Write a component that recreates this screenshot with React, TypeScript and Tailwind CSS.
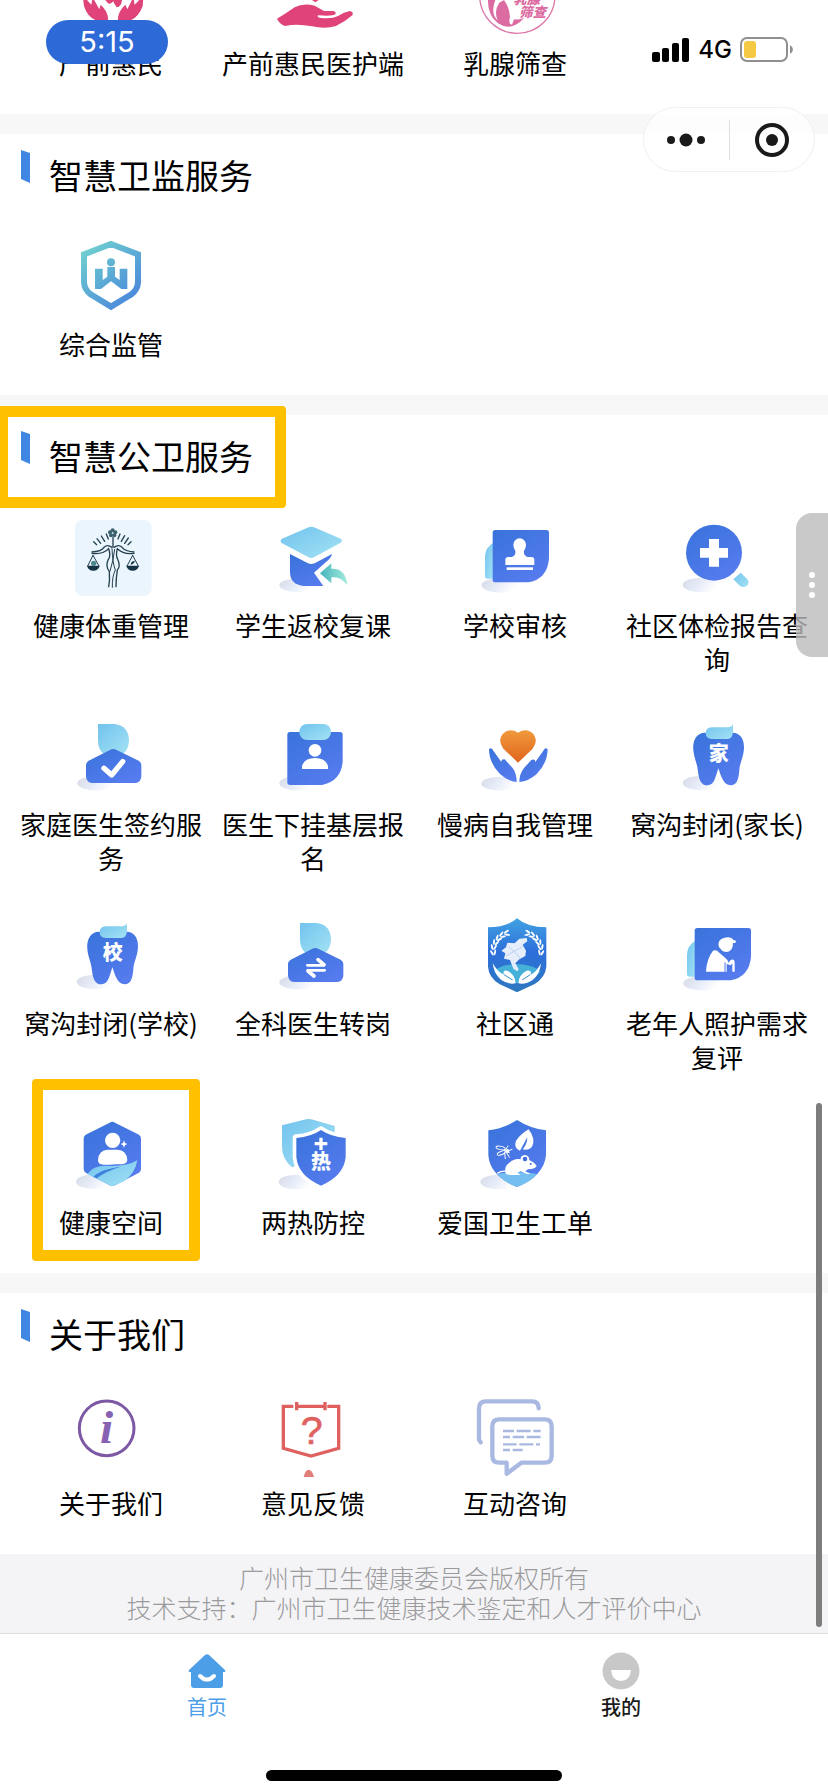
import React from "react";

type IconProps = { origin: string; children: React.ReactNode };

function Icon({ origin, children }: IconProps) {
  return (
    <svg viewBox={`${origin} 228 228`} className="size-[76px] shrink-0 overflow-visible" aria-hidden="true">
      {children}
    </svg>
  );
}

function Gradients() {
  return (
    <svg className="absolute size-0" aria-hidden="true">
      <defs>
        <linearGradient id="blue" x1="0" y1="0" x2="0.7" y2="1">
          <stop offset="0" stopColor="#3873da" />
          <stop offset="1" stopColor="#567bee" />
        </linearGradient>
        <linearGradient id="sky" x1="0" y1="0" x2="1" y2="1">
          <stop offset="0" stopColor="#72c3ee" />
          <stop offset="1" stopColor="#a3e2f4" />
        </linearGradient>
        <linearGradient id="shade" x1="0" y1="0" x2="1" y2="0.3">
          <stop offset="0" stopColor="#d6dae6" />
          <stop offset="0.5" stopColor="#e6ebf8" />
          <stop offset="1" stopColor="#ffffff" />
        </linearGradient>
        <linearGradient id="teal" x1="0" y1="0" x2="1" y2="0">
          <stop offset="0" stopColor="#43b3bb" />
          <stop offset="1" stopColor="#a5ecdd" />
        </linearGradient>
        <linearGradient id="shield" gradientUnits="userSpaceOnUse" x1="250" y1="140" x2="410" y2="320">
          <stop offset="0" stopColor="#70d2cf" />
          <stop offset="1" stopColor="#4781dc" />
        </linearGradient>
        <linearGradient id="orange" x1="0" y1="0" x2="0" y2="1">
          <stop offset="0" stopColor="#f09a3c" />
          <stop offset="1" stopColor="#e0641d" />
        </linearGradient>
        <linearGradient id="community" x1="0" y1="0" x2="0" y2="1">
          <stop offset="0" stopColor="#41a2e2" />
          <stop offset="0.45" stopColor="#2d6fdb" />
          <stop offset="1" stopColor="#2d78c0" />
        </linearGradient>
      </defs>
    </svg>
  );
}

function PregnancyIcon() {
  return (
    <Icon origin="219 -126">
      <g fill="#df4379">
        <path d="M246 -30 L252 18 Q262 52 290 62 H324 Q326 36 302 14 L298 28 L278 -8 L274 14 Q256 -2 246 -30Z" />
        <path d="M432 -30 L428 18 Q416 52 390 62 H354 Q352 36 376 14 L382 28 L400 -8 L404 14 Q424 -2 432 -30Z" />
        <path d="M316 0 H366 Q364 22 350 22 Q342 12 340 4 Q332 14 324 10 Z" />
      </g>
    </Icon>
  );
}

function CareHandIcon() {
  return (
    <Icon origin="825 -126">
      <path d="M936 0 L946 7 L956 0Z" fill="#df4379" />
      <path
        d="M831 56 Q856 42 884 22 Q910 8 944 17 L972 33 H1000 Q1010 35 1006 43 Q1000 49 954 46 Q950 50 958 53 Q994 58 1014 48 Q1032 36 1050 33 Q1062 36 1057 46 Q1034 66 1008 78 Q976 88 936 79 Q890 70 856 78 Q838 72 831 56Z"
        fill="#df4379"
      />
    </Icon>
  );
}

function ScreeningIcon() {
  return (
    <Icon origin="189 -126">
      <circle cx="310" cy="-13" r="113" fill="#ffffff" stroke="#dc76a8" strokeWidth="4" />
      <path d="M224 -20 Q214 40 252 70 Q284 92 318 66 L330 54 Q312 60 300 58 L294 74 Q282 74 288 50 Q286 22 270 0 L256 8 Q238 34 252 62 Q228 42 244 0 V-20Z" fill="#dc6ba2" />
      <g fill="#dc6ba2" className="font-['Noto_Sans_CJK_SC',sans-serif] font-black" fontSize="40" fontStyle="italic">
        <text x="298" y="11">乳腺</text>
        <text x="316" y="50">筛查</text>
      </g>
    </Icon>
  );
}

function SupervisionIcon() {
  return (
    <Icon origin="219 117">
      <path d="M333 132 L414 163 V247 Q413 268 394 283 L333 320 L272 283 Q253 268 252 247 V163Z" fill="none" stroke="url(#shield)" strokeWidth="18" />
      <g fill="url(#shield)">
        <circle cx="333" cy="187" r="12" />
        <path d="M285 206 H308 V240 L322 230 V201 H345 V230 L359 240 V206 H382 V267 H364 L333 244 L303 267 H285Z" />
      </g>
    </Icon>
  );
}

function WeightIcon() {
  return (
    <Icon origin="219 60">
      <rect x="225" y="60" width="230" height="228" rx="24" fill="#ebf5fd" />
      <g fill="none" stroke="#24404f" strokeWidth="4" strokeLinecap="round">
        <path d="M281 125 L290 134 M291 116 L302 130 M304 108 L314 124 M319 102 L325 117 M393 125 L384 134 M385 114 L374 130 M374 107 L364 124 M360 102 L354 117" />
        <path d="M339 112 V140 M276 156 Q304 154 312 142 Q322 132 336 142 M402 156 Q376 154 366 142 Q356 132 342 142" />
        <path d="M276 160 Q310 164 326 146 Q334 168 324 180 Q316 200 328 214 Q330 240 326 260 M402 160 Q370 164 352 146 Q346 168 354 180 Q362 200 352 210 Q348 236 348 260" />
        <path d="M336 146 Q338 190 346 210 Q336 230 337 262 M344 148 Q340 182 330 214" strokeWidth="3" />
        <path d="M279 166 L263 198 M279 166 L297 198 M398 166 L381 198 M398 166 L415 198" strokeWidth="3" />
      </g>
      <g fill="#153344">
        <path d="M261 197 H299 Q295 212 280 212 Q265 212 261 197Z M379 197 H417 Q413 212 398 212 Q383 212 379 197Z" />
        <circle cx="281" cy="190" r="8" fill="#4e8a8d" />
        <path d="M392 194 Q392 184 405 182 Q402 192 392 194Z" />
        <g fill="#3b606e">
          <circle cx="338" cy="91" r="6" />
          <circle cx="346" cy="97" r="6" />
          <circle cx="343" cy="106" r="6" />
          <circle cx="333" cy="106" r="6" />
          <circle cx="330" cy="97" r="6" />
        </g>
      </g>
    </Icon>
  );
}

function StudentIcon() {
  return (
    <Icon origin="825 60">
      <ellipse cx="892" cy="256" rx="54" ry="20" fill="url(#shade)" />
      <path d="M870 162 L924 190 Q934 194 944 190 L996 162 Q994 174 978 186 L942 218 L970 258 H912 Q870 254 870 216Z" fill="url(#blue)" />
      <path d="M846 116 L926 82 Q934 78 942 82 L1022 116 Q1030 122 1022 128 L942 172 Q934 176 926 172 L846 130 Q838 122 846 116Z" fill="url(#sky)" />
      <path d="M960 220 L994 190 V206 Q1038 204 1042 256 Q1022 228 994 232 V250Z" fill="url(#teal)" />
    </Icon>
  );
}

function CardBase() {
  return (
    <>
      <ellipse cx="260" cy="256" rx="58" ry="22" fill="url(#shade)" />
      <path d="M238 128 Q213 142 213 172 V228 Q213 236 221 236 H238Z" fill="url(#sky)" />
      <path d="M244 90 H397 Q405 90 405 98 V176 Q400 236 344 247 H244 Q236 247 236 239 V98 Q236 90 244 90Z" fill="url(#blue)" />
    </>
  );
}

function StampIcon() {
  return (
    <Icon origin="189 60">
      <CardBase />
      <g fill="#ffffff">
        <path d="M298 134 A19 19 0 1 1 336 134 Q336 144 330 152 Q328 168 342 171 H352 Q361 171 361 180 V195 H274 V180 Q274 171 283 171 H292 Q306 168 304 152 Q298 144 298 134Z" />
        <rect x="278" y="202" width="79" height="8" />
      </g>
    </Icon>
  );
}

function ElderIcon() {
  return (
    <Icon origin="189 60">
      <CardBase />
      <g fill="#ffffff">
        <path d="M309 148 Q302 124 326 119 Q346 115 352 126 L360 128 L358 135 H351 Q351 160 332 162 Q318 162 312 150Z" />
        <path d="M270 221 Q272 182 291 158 Q301 154 310 164 L328 180 Q338 188 338 194 L344 186 Q355 182 356 192 V221 H349 V196 L344 202 L332 198 V221Z" />
      </g>
      <path d="M327 193 V221" stroke="#4f76e8" strokeWidth="3" />
    </Icon>
  );
}

function ReportIcon() {
  return (
    <Icon origin="795 60">
      <ellipse cx="864" cy="255" rx="58" ry="22" fill="url(#shade)" />
      <path d="M958 238 L980 218 L1000 238 Q1008 248 998 258 Q988 264 978 258Z" fill="url(#sky)" />
      <circle cx="900" cy="158" r="84" fill="url(#blue)" />
      <path d="M885 117 H915 V144 H942 V173 H915 V200 H885 V173 H858 V144 H885Z" fill="#ffffff" />
    </Icon>
  );
}

function DoctorIcon({ variant }: { variant: "check" | "swap" }) {
  return (
    <Icon origin="219 57">
      <ellipse cx="292" cy="250" rx="60" ry="22" fill="url(#shade)" />
      <path d="M294 72 H344 Q387 78 387 122 Q386 150 366 164 H314 Q294 150 294 122Z" fill="url(#sky)" />
      <path d="M330 150 Q340 144 350 150 L416 182 Q424 187 424 196 V230 Q422 247 406 249 H276 Q260 247 258 230 V196 Q258 187 266 182Z" fill="url(#blue)" />
      {variant === "check" ? (
        <path d="M312 205 L335 225 L368 185" fill="none" stroke="#ffffff" strokeWidth="16" strokeLinecap="round" strokeLinejoin="round" />
      ) : (
        <g fill="none" stroke="#ffffff" strokeLinecap="round" strokeLinejoin="round">
          <path d="M316 199 H366 M368 214 H318" strokeWidth="8" />
          <path d="M366 197 L348 182 M318 216 L336 231" strokeWidth="11" />
        </g>
      )}
    </Icon>
  );
}

function ClipboardIcon() {
  return (
    <Icon origin="825 57">
      <ellipse cx="892" cy="250" rx="54" ry="22" fill="url(#shade)" />
      <path d="M870 96 H1020 Q1028 96 1028 104 V186 Q1022 244 966 255 H870 Q862 255 862 247 V104 Q862 96 870 96Z" fill="url(#blue)" />
      <rect x="898" y="72" width="95" height="48" rx="23" fill="url(#sky)" />
      <circle cx="945" cy="151" r="19" fill="#ffffff" />
      <path d="M906 207 V199 Q912 174 945 174 Q978 174 984 199 V207Z" fill="#ffffff" />
    </Icon>
  );
}

function HeartIcon() {
  return (
    <Icon origin="189 57">
      <ellipse cx="258" cy="251" rx="56" ry="21" fill="url(#shade)" />
      <path d="M312 188 L268 146 Q250 122 266 102 Q286 82 312 98 Q338 82 358 102 Q374 122 356 146Z" fill="url(#orange)" />
      <path d="M225 148 Q231 140 238 152 L262 186 Q262 176 272 178 L296 204 Q308 220 308 246 Q282 244 258 222 Q226 190 225 148Z" fill="url(#blue)" />
      <path d="M401 148 Q395 140 388 152 L364 186 Q364 176 352 180 L330 204 Q316 222 316 246 Q344 244 368 222 Q400 190 401 148Z" fill="url(#blue)" />
    </Icon>
  );
}

function ToothIcon({ char }: { char: string }) {
  return (
    <Icon origin="795 57">
      <ellipse cx="864" cy="249" rx="58" ry="22" fill="url(#shade)" />
      <path
        d="M880 99 C850 94 835 120 838 150 C840 175 850 190 852 215 C855 240 862 256 880 256 C902 256 905 228 913 205 C922 230 928 256 950 256 C970 256 974 235 976 210 C978 185 990 170 990 140 C990 110 970 92 945 100Z"
        fill="url(#blue)"
      />
      <path d="M893 82 H940 Q954 82 956 72 Q962 117 940 117 H893 Q875 116 875 100 Q875 83 893 82Z" fill="url(#sky)" />
      <text x="914" y="184" textAnchor="middle" fontSize="60" fill="#ffffff" className="font-['Noto_Sans_CJK_SC',sans-serif] font-black">
        {char}
      </text>
    </Icon>
  );
}

const leaves = [
  [238, 156, -10],
  [239, 140, 10],
  [245, 126, 25],
  [254, 114, 42],
  [266, 105, 60],
  [280, 99, 78],
];

function Laurel() {
  return (
    <g fill="#ffffff">
      {leaves.map(([x, y, angle]) => (
        <g key={y} transform={`translate(${x} ${y}) rotate(${angle})`}>
          <ellipse cx="-5" cy="0" rx="3" ry="9" transform="rotate(-22)" />
          <ellipse cx="5" cy="0" rx="3" ry="9" transform="rotate(22)" />
        </g>
      ))}
    </g>
  );
}

function CommunityIcon() {
  return (
    <Icon origin="189 54">
      <path d="M309 55 Q340 82 397 82 V200 Q394 232 362 252 L309 277 L256 252 Q224 232 222 200 V82 Q280 82 309 55Z" fill="url(#community)" />
      <path d="M240 214 Q258 194 309 192 Q358 194 380 214 Q356 248 309 250 Q262 248 240 214Z" fill="#46b1d8" />
      <Laurel />
      <g transform="translate(619 0) scale(-1 1)">
        <Laurel />
      </g>
      <path d="M262 152 L276 142 L280 128 L302 130 L316 116 L338 114 L340 124 L326 134 L336 152 L334 168 L316 178 L304 190 L314 208 L310 214 L298 206 L288 180 L270 176 L274 160Z" fill="#e6eefb" />
      <path d="M284 140 L300 154 L326 140 M276 168 L300 154 L318 174" fill="none" stroke="#a9c0e6" strokeWidth="2" />
      <path d="M236 190 Q252 218 270 224 Q264 210 280 212 Q304 224 305 250 Q282 254 262 240 Q240 222 236 190Z M381 190 Q366 218 350 224 Q354 210 338 212 Q314 224 313 250 Q336 254 356 240 Q378 222 381 190Z" fill="#ffffff" />
      <path d="M270 224 L296 240 M349 224 L324 240" stroke="#3b91cd" strokeWidth="3" />
    </Icon>
  );
}

function HealthSpaceIcon() {
  return (
    <Icon origin="219 141">
      <ellipse cx="282" cy="335" rx="54" ry="22" fill="url(#shade)" />
      <path d="M329 158 Q337 153 345 158 L417 194 Q423 198 423 206 V296 Q423 304 417 308 L345 346 Q337 350 329 346 L257 308 Q251 304 251 296 V206 Q251 198 257 194Z" fill="url(#blue)" />
      <path d="M262 312 Q282 282 334 288 Q384 288 412 271 Q406 310 372 334 L345 346 Q337 350 329 346Z" fill="url(#sky)" />
      <path d="M280 320 Q300 298 362 290 Q316 304 290 325Z" fill="#3d83de" />
      <circle cx="338" cy="211" r="23" fill="#ffffff" />
      <path d="M294 270 Q296 240 324 239 H352 Q380 240 382 270 Q380 284 360 283 Q342 282 330 284 H310 Q294 284 294 270Z" fill="#ffffff" />
      <path d="M372 211 L375 219 L382 222 L375 226 L372 233 L369 226 L362 222 L369 219Z" fill="#ffffff" />
    </Icon>
  );
}

function FeverIcon() {
  return (
    <Icon origin="825 141">
      <ellipse cx="890" cy="336" rx="54" ry="22" fill="url(#shade)" />
      <path d="M846 166 L918 148 Q926 146 934 148 L1004 168 V240 L876 292 Q846 266 846 230Z" fill="url(#sky)" />
      <path d="M963 180 Q992 200 1037 204 V262 Q1031 318 963 347 Q895 318 889 262 V204 Q934 200 963 180Z" fill="url(#blue)" stroke="#ffffff" strokeWidth="22" paintOrder="stroke" strokeLinejoin="round" />
      <path d="M958 203 H968 V216 H982 V226 H968 V240 H958 V226 H944 V216 H958Z" fill="#ffffff" />
      <text x="963" y="297" textAnchor="middle" fontSize="60" fill="#ffffff" className="font-['Noto_Sans_CJK_SC',sans-serif] font-black">
        热
      </text>
    </Icon>
  );
}

function SanitationIcon() {
  return (
    <Icon origin="1431 141">
      <ellipse cx="1498" cy="336" rx="57" ry="22" fill="url(#shade)" />
      <path d="M1551 150 Q1592 176 1638 181 V256 Q1632 318 1551 351 Q1470 318 1465 256 V181 Q1510 176 1551 150Z" fill="url(#blue)" />
      <path d="M1492 312 Q1551 300 1612 312 Q1592 336 1551 351 Q1510 336 1492 312Z" fill="#75bff0" />
      <g fill="#ffffff">
        <path d="M1586 178 Q1608 208 1596 230 Q1586 242 1568 238 Q1582 222 1582 202 Q1572 220 1560 242 Q1540 234 1548 212 Q1562 192 1586 178Z" />
        <path d="M1518 312 Q1510 290 1528 278 Q1544 264 1562 268 Q1562 256 1574 255 Q1588 256 1588 270 Q1602 276 1610 288 Q1604 298 1584 298 L1576 304 L1592 312 H1580 L1562 304 L1552 308 L1562 315 H1530Z" />
      </g>
      <path d="M1522 304 Q1504 302 1492 310" fill="none" stroke="#ffffff" strokeWidth="4" />
      <circle cx="1575" cy="267" r="7" fill="#416fe0" />
      <circle cx="1592" cy="282" r="3" fill="#416fe0" />
      <g fill="none" stroke="#ffffff" strokeWidth="3" strokeLinecap="round">
        <ellipse cx="1502" cy="234" rx="14" ry="5" transform="rotate(12 1502 234)" />
        <ellipse cx="1504" cy="249" rx="13" ry="5" transform="rotate(-22 1504 249)" />
        <path d="M1514 242 L1528 248 M1516 240 L1524 228 M1522 244 L1536 238 M1520 248 L1528 262 M1514 248 L1516 266" />
      </g>
      <circle cx="1522" cy="243" r="6" fill="#ffffff" />
    </Icon>
  );
}

function AboutIcon() {
  return (
    <Icon origin="219 293">
      <circle cx="320" cy="384" r="82" fill="none" stroke="#7d59a5" strokeWidth="9" />
      <text x="320" y="428" textAnchor="middle" fontSize="142" fill="#8761b2" className="font-['Liberation_Serif',serif] font-bold italic">
        i
      </text>
    </Icon>
  );
}

function FeedbackIcon() {
  return (
    <Icon origin="825 293">
      <path
        d="M880 318 H850 V444 L933 467 L1016 444 V318 H982 M892 318 H970 M890 305 V330 M975 305 V330"
        fill="none"
        stroke="#de615f"
        strokeWidth="10"
      />
      <text x="935" y="432" textAnchor="middle" fontSize="118" fill="#de615f" stroke="#de615f" strokeWidth="2" className="font-['Liberation_Sans',sans-serif]">
        ?
      </text>
      <path d="M911 530 Q916 508 926 508 Q936 508 942 530Z" fill="#e37f7b" />
    </Icon>
  );
}

function ChatIcon() {
  return (
    <Icon origin="1431 293">
      <g fill="none" stroke="#aab9e2" strokeWidth="13" strokeLinecap="round" strokeLinejoin="round">
        <path d="M1442 426 L1437 418 V324 Q1437 303 1458 303 H1596 Q1616 303 1616 324" />
        <path d="M1498 357 H1634 Q1655 357 1655 378 V466 Q1655 487 1634 487 H1564 L1520 520 V487 H1498 Q1477 487 1477 466 V378 Q1477 357 1498 357Z" />
      </g>
      <path
        d="M1509 392 H1542 M1550 392 H1592 M1600 392 H1622 M1509 410 H1530 M1538 410 H1572 M1580 410 H1622 M1509 432 H1550 M1558 432 H1600 M1608 432 H1620 M1509 449 H1530 M1538 449 H1568"
        stroke="#aab9e2"
        strokeWidth="7"
      />
    </Icon>
  );
}

type Service = { label: string; icon: React.ReactNode; highlighted?: boolean };

const prenatal: Service[] = [
  { label: "产前惠民", icon: <PregnancyIcon /> },
  { label: "产前惠民医护端", icon: <CareHandIcon /> },
  { label: "乳腺筛查", icon: <ScreeningIcon /> },
];

const supervision: Service[] = [{ label: "综合监管", icon: <SupervisionIcon /> }];

const publicHealth: Service[] = [
  { label: "健康体重管理", icon: <WeightIcon /> },
  { label: "学生返校复课", icon: <StudentIcon /> },
  { label: "学校审核", icon: <StampIcon /> },
  { label: "社区体检报告查询", icon: <ReportIcon /> },
  { label: "家庭医生签约服务", icon: <DoctorIcon variant="check" /> },
  { label: "医生下挂基层报名", icon: <ClipboardIcon /> },
  { label: "慢病自我管理", icon: <HeartIcon /> },
  { label: "窝沟封闭(家长)", icon: <ToothIcon char="家" /> },
  { label: "窝沟封闭(学校)", icon: <ToothIcon char="校" /> },
  { label: "全科医生转岗", icon: <DoctorIcon variant="swap" /> },
  { label: "社区通", icon: <CommunityIcon /> },
  { label: "老年人照护需求复评", icon: <ElderIcon /> },
  { label: "健康空间", icon: <HealthSpaceIcon />, highlighted: true },
  { label: "两热防控", icon: <FeverIcon /> },
  { label: "爱国卫生工单", icon: <SanitationIcon /> },
];

const about: Service[] = [
  { label: "关于我们", icon: <AboutIcon /> },
  { label: "意见反馈", icon: <FeedbackIcon /> },
  { label: "互动咨询", icon: <ChatIcon /> },
];

function ServiceGrid({ items }: { items: Service[] }) {
  return (
    <div className="grid grid-cols-4 gap-y-[43px] px-[10px] pb-[34px]">
      {items.map((item) => (
        <a key={item.label} href="#" className="relative flex flex-col items-center gap-3 text-center text-[26px] leading-[34px] text-black">
          {item.icon}
          <span className="w-full px-[2px]">{item.label}</span>
          {item.highlighted && (
            <span className="pointer-events-none absolute -top-[38px] left-[22px] h-[182px] w-[168px] rounded-[4px] border-[11px] border-[#ffc000]" />
          )}
        </a>
      ))}
    </div>
  );
}

function Section({ title, items, highlighted }: { title: string; items: Service[]; highlighted?: boolean }) {
  return (
    <section className="relative bg-white">
      <header className="flex h-[105px] items-start gap-[19px] pl-[21px]">
        <svg viewBox="0 0 9 33" className="mt-4 h-[33px] w-[9px]" aria-hidden="true">
          <path d="M0 0 L9 3 V33 L0 29Z" fill="#3f87e2" />
        </svg>
        <h2 className="mt-5 text-[34px] leading-[42px] text-black">{title}</h2>
      </header>
      <ServiceGrid items={items} />
      {highlighted && (
        <span className="pointer-events-none absolute -top-[9px] left-0 h-[102px] w-[286px] rounded-r-[4px] border-[11px] border-l-8 border-[#ffc000]" />
      )}
    </section>
  );
}

function StatusBar() {
  return (
    <div className="absolute inset-x-0 top-5 flex items-start justify-between pr-[34px] pl-[46px]">
      <time className="h-11 w-[122px] rounded-full bg-[#2e69d8] text-center font-[Inter,sans-serif] text-[29px] leading-[44px] text-white">5:15</time>
      <div className="mt-[17px] flex items-center gap-2">
        <svg viewBox="0 0 38 24" className="h-6 w-[38px]" aria-hidden="true">
          <rect x="0" y="14" width="8" height="10" rx="2" />
          <rect x="10" y="10" width="7" height="14" rx="2" />
          <rect x="20" y="5" width="7" height="19" rx="2" />
          <rect x="30" y="0" width="7" height="24" rx="2" />
        </svg>
        <span className="font-[Inter,sans-serif] text-[24px] leading-[26px] font-medium text-black">4G</span>
        <svg viewBox="0 0 54 26" className="h-[26px] w-[54px]" aria-hidden="true">
          <rect x="1" y="1" width="46" height="23" rx="6" fill="#ffffff" stroke="#8f8f8f" strokeWidth="2" />
          <rect x="4" y="4" width="12" height="17" rx="3" fill="#f6c945" />
          <path d="M50 8 Q53 10 53 12.500 Q53 15 50 17Z" fill="#8f8f8f" />
        </svg>
      </div>
    </div>
  );
}

function Capsule() {
  return (
    <div className="absolute top-[107px] right-[13px] flex h-[65px] w-[172px] items-center rounded-full border border-[#f0f0f0] bg-white/80">
      <button type="button" aria-label="更多" className="flex flex-1 justify-center">
        <svg viewBox="0 0 38 14" className="h-[14px] w-[38px]" fill="#1a1a1a">
          <circle cx="4" cy="7" r="4" />
          <circle cx="19" cy="7" r="6.500" />
          <circle cx="34" cy="7" r="4" />
        </svg>
      </button>
      <span className="h-10 w-px bg-[#dedede]" />
      <button type="button" aria-label="关闭" className="flex flex-1 justify-center">
        <svg viewBox="0 0 34 34" className="size-[34px]">
          <circle cx="17" cy="17" r="15" fill="none" stroke="#1a1a1a" strokeWidth="4" />
          <circle cx="17" cy="17" r="6" fill="#1a1a1a" />
        </svg>
      </button>
    </div>
  );
}

function TabBar() {
  return (
    <nav className="relative grid h-[158px] grid-cols-2 border-t border-[#dfdfe0] bg-white pt-[18px] text-[20px] leading-[28px]">
      <a href="#" className="flex flex-col items-center gap-[3px] text-[#4c9fe6]">
        <svg viewBox="0 0 38 38" className="size-[38px]" aria-hidden="true">
          <path d="M17 3 Q19 1.500 21 3 L37 18 Q38 20 36 20 H35 V33 Q35 36 32 36 H6 Q3 36 3 33 V20 H2 Q0 20 1 18Z" fill="#4c9fe6" />
          <path d="M12 24 Q19 31 26 24" fill="none" stroke="#ffffff" strokeWidth="4" strokeLinecap="round" />
        </svg>
        首页
      </a>
      <a href="#" className="flex flex-col items-center gap-[3px] font-medium text-[#1a1a1a]">
        <svg viewBox="0 0 38 38" className="size-[38px]" aria-hidden="true">
          <circle cx="19" cy="19" r="18.500" fill="#c8c8c8" />
          <path d="M9 18 H29 Q28 29 19 29 Q10 29 9 18Z" fill="#ffffff" />
        </svg>
        我的
      </a>
      <span className="absolute bottom-[10px] left-1/2 h-[11px] w-[296px] -translate-x-1/2 rounded-full bg-black" />
    </nav>
  );
}

export default function App() {
  return (
    <div className="relative min-h-screen overflow-x-hidden bg-white font-['Noto_Sans_CJK_SC',sans-serif]">
      <Gradients />
      <main className="flex flex-col gap-5 bg-[#f7f7f8]">
        <section className="flex h-[114px] flex-col justify-end overflow-hidden bg-white">
          <ServiceGrid items={prenatal} />
        </section>
        <Section title="智慧卫监服务" items={supervision} />
        <Section title="智慧公卫服务" items={publicHealth} highlighted />
        <Section title="关于我们" items={about} />
      </main>
      <footer className="bg-[#f4f4f6] pt-2 pb-[11px] text-center text-[25px] leading-[30px] font-light text-[#9b9b9d]">
        <p>广州市卫生健康委员会版权所有</p>
        <p>技术支持：广州市卫生健康技术鉴定和人才评价中心</p>
      </footer>
      <TabBar />
      <StatusBar />
      <Capsule />
      <button type="button" aria-label="展开侧栏" className="absolute top-[513px] right-0 flex h-36 w-8 flex-col items-center justify-center gap-1 rounded-l-2xl bg-[#bcbcbc]/80">
        <span className="size-[6px] rounded-full bg-white" />
        <span className="size-[6px] rounded-full bg-white" />
        <span className="size-[6px] rounded-full bg-white" />
      </button>
      <span className="absolute top-[1103px] right-[6px] h-[524px] w-[6px] rounded-full bg-[#7d7d7d]" />
    </div>
  );
}
